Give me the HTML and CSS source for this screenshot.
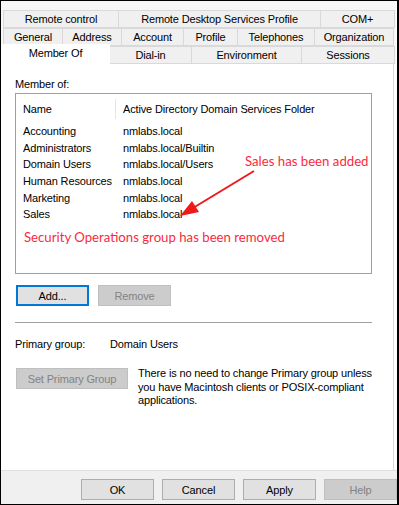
FILE: index.html
```html
<!DOCTYPE html>
<html>
  <head>
    <title>Properties - Member Of</title>
    <meta charset="utf-8" />
    <link rel="stylesheet" href="styles.css">
  </head>
  <body>
    <div class="dialog">
      <div class="tabs">
        <div class="tab_row">
          <div class="tab w115">Remote control</div>
          <div class="tab w202">Remote Desktop Services Profile</div>
          <div class="tab w74">COM+</div>
        </div>
        <div class="tab_row">
          <div class="tab w59">General</div>
          <div class="tab w59">Address</div>
          <div class="tab w62">Account</div>
          <div class="tab w54">Profile</div>
          <div class="tab w77">Telephones</div>
          <div class="tab w80">Organization</div>
        </div>
        <div class="tab_row tab_row_front">
          <div class="tab tab_selected">Member Of</div>
          <div class="tab w82">Dial-in</div>
          <div class="tab w111">Environment</div>
          <div class="tab w93">Sessions</div>
        </div>
      </div>

      <div class="page">
        <p class="label">Member of:</p>
        <div class="list">
          <div class="list_head">
            <span class="col_name">Name</span>
            <span class="col_sep"></span>
            <span class="col_folder">Active Directory Domain Services Folder</span>
          </div>
          <div class="list_row"><span class="col_name">Accounting</span><span class="col_folder">nmlabs.local</span></div>
          <div class="list_row"><span class="col_name">Administrators</span><span class="col_folder">nmlabs.local/Builtin</span></div>
          <div class="list_row"><span class="col_name">Domain Users</span><span class="col_folder">nmlabs.local/Users</span></div>
          <div class="list_row"><span class="col_name">Human Resources</span><span class="col_folder">nmlabs.local</span></div>
          <div class="list_row"><span class="col_name">Marketing</span><span class="col_folder">nmlabs.local</span></div>
          <div class="list_row"><span class="col_name">Sales</span><span class="col_folder">nmlabs.local</span></div>
        </div>

        <div class="button_row">
          <button class="btn btn_focus">Add...</button>
          <button class="btn btn_disabled">Remove</button>
        </div>

        <div class="separator"></div>

        <div class="primary">
          <span class="primary_label">Primary group:</span>
          <span>Domain Users</span>
        </div>

        <div class="primary_set">
          <button class="btn btn_disabled btn_wide">Set Primary Group</button>
          <p class="hint">There is no need to change Primary group unless you have Macintosh clients or POSIX-compliant applications.</p>
        </div>
      </div>

      <div class="footer">
        <button class="btn">OK</button>
        <button class="btn">Cancel</button>
        <button class="btn">Apply</button>
        <button class="btn btn_disabled">Help</button>
      </div>

      <!-- annotations drawn over the screenshot -->
      <p class="note note_added">Sales has been added</p>
      <p class="note note_removed">Security Operations group has been removed</p>
      <svg class="arrow" width="399" height="505" viewBox="0 0 399 505">
        <line x1="254" y1="171" x2="193" y2="208" stroke="#f01818" stroke-width="2" />
        <polygon points="180,216 192,201 199,212" fill="#f01818" />
      </svg>
    </div>
  </body>
</html>
```

FILE: styles.css
```css
body {
  margin: 0;
  padding: 0;
  font-family: "Liberation Sans", Arial, sans-serif;
  font-size: 11px;
  letter-spacing: -0.15px;
  color: #000;
}
p {
  margin: 0;
  padding: 0;
}

.dialog {
  position: relative;
  width: 399px;
  height: 505px;
  box-sizing: border-box;
  border: 1px solid #000;
  border-right-width: 2px;
  background-color: #fff;
  display: flex;
  flex-direction: column;
}

/* tab strip */
.tabs {
  background-color: #f7f7f7;
  padding: 9px 0 0 2px;
  width: 393px;
}
.tab_row {
  display: flex;
  height: 18px;
}
.tab {
  box-sizing: border-box;
  height: 18px;
  line-height: 16px;
  text-align: center;
  background-color: #f0f0f0;
  border: 1px solid #d9d9d9;
  margin-right: -1px;
  white-space: nowrap;
}
.tab_row_front {
  margin-left: -2px;
}
.tab_selected {
  width: 109px;
  height: 20px;
  margin-top: -2px;
  background-color: #fff;
  border-color: #fff;
  border-bottom: 0;
  line-height: 17px;
  position: relative;
  z-index: 1;
}
.w54 { width: 55px; }
.w59 { width: 60px; }
.w62 { width: 63px; }
.w74 { width: 75px; }
.w77 { width: 78px; }
.w80 { width: 80px; }
.w82 { width: 83px; }
.w93 { width: 94px; }
.w111 { width: 111px; }
.w115 { width: 116px; }
.w202 { width: 203px; }

/* page body */
.page {
  width: 393px;
  box-sizing: border-box;
  flex: 1;
  border-right: 1px solid #d9d9d9;
  padding: 12px 0 0 14px;
}
.label {
  line-height: 16px;
}
.list {
  margin-top: 1px;
  width: 357px;
  height: 181px;
  box-sizing: border-box;
  border: 1px solid #a0a0a0;
  padding-top: 5px;
}
.list_head,
.list_row {
  display: flex;
  align-items: center;
}
.list_head {
  height: 20px;
  margin-bottom: 4px;
}
.list_row {
  height: 16.6px;
}
.col_name {
  width: 100px;
  padding-left: 7px;
}
.col_sep {
  width: 1px;
  height: 20px;
  background-color: #e5e5e5;
  margin-left: -8px;
  margin-right: 7px;
}
.col_folder {
  white-space: nowrap;
}

.btn {
  box-sizing: border-box;
  width: 73px;
  height: 21px;
  padding: 0;
  font-family: "Liberation Sans", Arial, sans-serif;
  font-size: 11px;
  letter-spacing: -0.15px;
  color: #000;
  background-color: #e1e1e1;
  border: 1px solid #adadad;
}
.btn_focus {
  border: 2px solid #0078d7;
}
.btn_disabled {
  background-color: #cccccc;
  border-color: #bfbfbf;
  color: #838383;
}
.btn_wide {
  width: 112px;
  flex-shrink: 0;
}

.button_row {
  display: flex;
  gap: 9px;
  margin: 11px 0 0 1px;
}
.separator {
  width: 357px;
  height: 1px;
  background-color: #a0a0a0;
  margin-top: 16px;
}
.primary {
  display: flex;
  margin-top: 14px;
  line-height: 14px;
}
.primary_label {
  width: 95px;
}
.primary_set {
  display: flex;
  gap: 10px;
  margin: 17px 0 0 1px;
}
.hint {
  width: 240px;
  line-height: 13.5px;
  margin-top: -1px;
}

/* bottom buttons */
.footer {
  height: 34px;
  box-sizing: border-box;
  background-color: #f0f0f0;
  border-top: 1px solid #dfdfdf;
  display: flex;
  justify-content: flex-end;
  gap: 8px;
  padding-top: 8px;
}

/* red annotations */
.note {
  position: absolute;
  font-family: Lato, "Liberation Sans", sans-serif;
  font-size: 13.2px;
  letter-spacing: 0;
  color: #fa2a3c;
  white-space: nowrap;
}
.note_added {
  left: 244px;
  top: 152px;
}
.note_removed {
  left: 23px;
  top: 228px;
}
.arrow {
  position: absolute;
  left: -1px;
  top: -1px;
  pointer-events: none;
}
```
